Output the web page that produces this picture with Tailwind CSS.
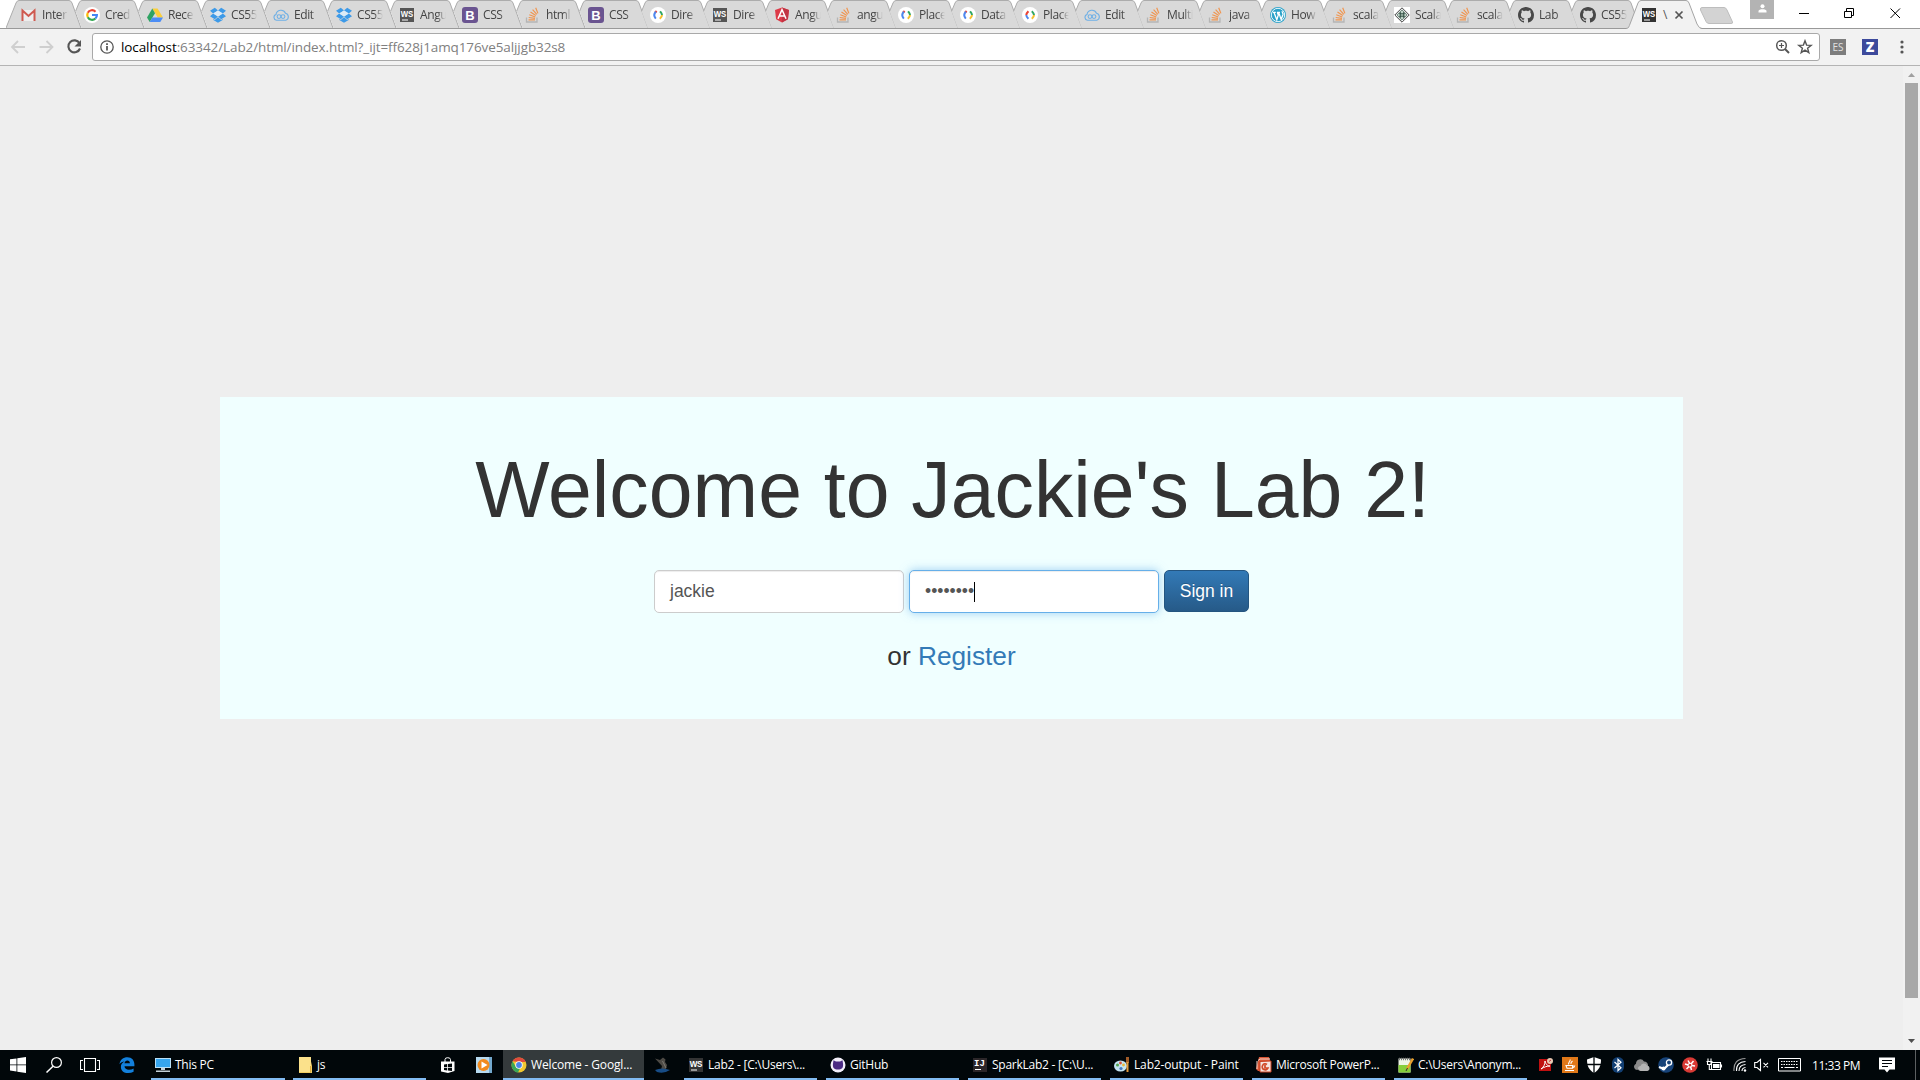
<!DOCTYPE html>
<html lang="en">
<head>
<meta charset="utf-8">
<title>Welcome</title>
<script src="https://cdn.jsdelivr.net/npm/@tailwindcss/browser@4"></script>
</head>
<body class="flex h-[1080px] w-[1920px] flex-col overflow-hidden bg-[#eeeeee] font-['Open_Sans','Noto_Sans',sans-serif]">

<svg class="hidden">
  <symbol id="gmail" viewBox="0 0 16 16"><path d="M1 3h13v11H1z" fill="#eee"/><path d="M1.500 14V3.500l6 5.500 6-5.500V14" fill="none" stroke="#cf5a50" stroke-width="2"/></symbol>
  <symbol id="google" viewBox="0 0 16 16"><circle cx="8" cy="8" r="8" fill="#fff"/><g fill="none" stroke-width="2.200"><path d="M11.500 4.700A4.800 4.800 0 0 0 3.800 5.800" stroke="#ea4335"/><path d="M3.800 5.800a4.800 4.800 0 0 0 0 4.400" stroke="#fbbc05"/><path d="M3.800 10.200a4.800 4.800 0 0 0 7.600 1.300" stroke="#34a853"/><path d="M11.400 11.500A4.800 4.800 0 0 0 12.900 8H8" stroke="#4285f4"/></g></symbol>
  <symbol id="drive" viewBox="0 0 16 16"><path d="M5.400 1.500h5.200L16 10.500h-5.300z" fill="#fbcf3b"/><path d="M5.300 1.600 8 6.200 2.700 15 0 10.500z" fill="#2fa363"/><path d="M5.300 10.500H16L13.300 15H2.700z" fill="#4c8df5"/></symbol>
  <symbol id="dropbox" viewBox="0 0 16 16"><path d="M4.800.8 8 3.500 3.200 6.500 0 3.800zM11.200.8 16 3.800 12.800 6.500 8 3.500zM0 9.300 3.200 6.500 8 9.500 4.800 12.300zM12.800 6.500 16 9.300 11.200 12.300 8 9.500zM8 10.300l3.200 2.700 1.500-1v1L8 15.800 3.300 13v-1l1.500 1z" fill="#3d9ae8"/><path d="M8 3.500l4.800 3L8 9.500l-4.800-3z" fill="#dcebf7"/></symbol>
  <symbol id="cloud" viewBox="0 0 16 16"><g fill="none" stroke="#6fb0e6" stroke-width="1.100"><path d="M3.500 13.300a3 3 0 0 1-.5-5.800 5 5 0 0 1 9.500-1.300 3.700 3.700 0 0 1 .3 7.100z"/><circle cx="6" cy="9.600" r="1.900"/><circle cx="10" cy="9.600" r="1.900"/></g></symbol>
  <symbol id="ws" viewBox="0 0 16 16"><path d="M1 1h14v14H1z" fill="currentColor"/><text x="8" y="9.800" font-size="9.500" font-weight="bold" text-anchor="middle" textLength="12.500" lengthAdjust="spacingAndGlyphs" fill="#fff" font-family="Liberation Sans">WS</text><path d="M3 12.500h6v1H3z" fill="#fff"/></symbol>
  <symbol id="boot" viewBox="0 0 16 16"><rect width="16" height="16" rx="3" fill="#6a5490"/><text x="8" y="12.800" font-size="13" font-weight="bold" text-anchor="middle" fill="#fff" font-family="Liberation Sans">B</text></symbol>
  <symbol id="so" viewBox="0 0 16 16"><path d="M1.500 10.500v4.500h10.500v-4.500" fill="none" stroke="#b5b5b5" stroke-width="1.300"/><path d="M3.500 12.800h6.500M3.700 10.500l6.300.9M4.300 7.800l6 2.200M5.500 5l5.300 3.500M7.600 2.700l4.200 4.700M10.700.8l2.200 5.600" stroke="#f0954f" stroke-width="1.200"/></symbol>
  <symbol id="dev" viewBox="0 0 16 16"><circle cx="8" cy="8" r="8" fill="#fff"/><g fill="none" stroke-width="2"><path d="M6.600 4 5 5.700" stroke="#ea4335"/><path d="M5.800 4.700C3.600 7 3.600 9 5.800 11.600" stroke="#4c86ee"/><path d="M10 4.300C11 5.500 12 6.500 12 8" stroke="#30a663"/><path d="M12 8c0 1.500-1 2.500-2.200 3.800" stroke="#f5c02e"/></g></symbol>
  <symbol id="dev2" viewBox="0 0 16 16"><circle cx="8" cy="8" r="8" fill="#fff"/><g fill="none" stroke-width="2"><path d="M6.400 4.200C5 5.600 4.300 6.700 4.300 8" stroke="#ea4335"/><path d="M4.300 8c0 1.300.7 2.400 2.100 3.800" stroke="#4c86ee"/><path d="M9.800 4.200C11 5.500 12 6.500 12 8" stroke="#30a663"/><path d="M12 8c0 1.500-1 2.500-2.200 3.800" stroke="#f5c02e"/></g></symbol>
  <symbol id="ng" viewBox="0 0 16 16"><path d="M8 .5 15 3l-1.100 9.300L8 15.500l-5.900-3.200L1 3z" fill="#dd3a48"/><path d="M8 .5 15 3l-1.100 9.300L8 15.500z" fill="#c23443"/><path d="M4 11.700 8 2.700l4 9M5.800 9h4.400" fill="none" stroke="#fff" stroke-width="1.500"/></symbol>
  <symbol id="wp" viewBox="0 0 16 16"><circle cx="8" cy="8" r="8" fill="#2ba2c9"/><circle cx="8" cy="8" r="6.700" fill="none" stroke="#fff" stroke-width=".9"/><path d="M2.800 5.300h3M3.900 5.300l2.900 7.500L8.300 8 7.300 5.300M7 5.300h3M8.600 5.300l2.600 7.200 1.800-5c.3-1-.9-2-.9-3.200" fill="none" stroke="#fff" stroke-width="1.300"/></symbol>
  <symbol id="dia" viewBox="0 0 16 16"><path d="M0 0h16v16H0z" fill="#fff"/><path d="M8 .8 15.200 8 8 15.200.8 8z" fill="none" stroke="#444"/><path d="M8 2.800 13.200 8 8 13.200 2.800 8z" fill="#bfd3c8" stroke="#345045" stroke-width=".7"/><path d="M5 6.500h6M5 8h6M5 9.500h6M6.500 5v6M9.500 5v6" stroke="#2c4a3e" stroke-width=".7"/></symbol>
  <symbol id="gh" viewBox="0 0 16 16"><path fill="#484848" d="M8 0C3.580 0 0 3.580 0 8c0 3.540 2.290 6.530 5.470 7.590.4.070.55-.17.55-.38 0-.19-.01-.82-.01-1.490-2.010.37-2.530-.49-2.690-.94-.09-.23-.48-.94-.82-1.130-.28-.15-.68-.52-.01-.53.63-.01 1.080.58 1.230.82.720 1.210 1.870.87 2.330.66.070-.52.280-.87.510-1.070-1.780-.2-3.640-.89-3.640-3.950 0-.87.310-1.590.82-2.150-.08-.2-.36-1.020.08-2.120 0 0 .67-.21 2.200.82.640-.18 1.320-.27 2-.27s1.360.09 2 .27c1.530-1.040 2.200-.82 2.200-.82.440 1.100.16 1.920.08 2.120.51.560.82 1.270.82 2.150 0 3.070-1.870 3.750-3.650 3.950.29.250.54.730.54 1.480 0 1.070-.01 1.930-.01 2.200 0 .21.150.46.550.38A8.010 8.010 0 0 0 16 8c0-4.420-3.580-8-8-8z"/></symbol>
</svg>

<!-- Tab strip -->
<header class="relative flex h-[29px] shrink-0 border-b border-[#999999] bg-white pl-[6px]">
  <div id="tabs" class="flex"></div>
  <div class="relative flex h-[29px] w-[78px] items-center pl-[14px]">
    <svg class="absolute top-0 left-[-1px] h-[29px] w-[78px]" viewBox="0 0 78 29"><path d="M0 28.500C3 28.500 3 26 4 24L12 3Q13 .5 15 .5H60Q62 .5 63 3L71 24Q73 28.500 75 28.500V29H0z" fill="#f2f2f2"/><path d="M0 28.500C3 28.500 3 26 4 24L12 3Q13 .5 15 .5H60Q62 .5 63 3L71 24Q73 28.500 76 28.500" fill="none" stroke="#a5a5a5"/></svg>
    <svg class="relative size-4 text-[#333333]"><use href="#ws"/></svg>
    <span class="relative ml-[6px] w-[8px] text-[12px] text-[#555555]">\</span>
    <svg class="relative ml-[3px] size-[10px]" viewBox="0 0 10 10"><path d="M1.500 1.500l7 7m0-7-7 7" stroke="#555" stroke-width="1.700"/></svg>
  </div>
  <svg class="mt-[6px] ml-[-6px] h-[19px] w-[36px]" viewBox="0 0 36 19"><path d="M3 1.500H25Q27 1.500 28 4L33.500 16Q34 17.500 32 17.500H10Q8 17.500 7 15.500L1.500 4Q1 1.500 3 1.500z" fill="#d3d3d3" stroke="#bdbdbd"/></svg>
  <div class="ml-auto flex">
    <div class="mr-[22px] flex h-[19px] w-[24px] justify-center bg-[#b3b3b3]"><svg class="mt-[4px] size-[9px]" viewBox="0 0 9 9"><circle cx="4.500" cy="2.200" r="2" fill="#fff"/><path d="M.5 8.500V7c0-2.200 8-2.200 8 0v1.500z" fill="#fff"/></svg></div>
    <svg class="mt-[3px] h-[20px] w-[124px]" viewBox="0 0 124 20"><g fill="none" stroke="#000"><path d="M3 10.500h10M48.500 8.500h7v6h-7zM50.500 8.500v-3h7v7h-2M94.500 5.500l9.500 9.500m0-9.500-9.500 9.500"/></g></svg>
  </div>
</header>

<!-- Toolbar -->
<div class="flex h-[37px] shrink-0 items-center border-b border-[#b4b4b4] bg-[#f2f2f2]">
  <svg class="ml-[10px] h-[18px] w-[74px]" viewBox="0 0 74 18"><g fill="none" stroke="#cfcfcf" stroke-width="1.800"><path d="M15 9H2m6-6L2 9l6 6M29.500 9h13m-6-6 6 6-6 6"/></g><path d="M69.500 5.200A6 6 0 1 0 70 10.500" fill="none" stroke="#555" stroke-width="2.100"/><path d="M71 2v6.500h-6.500z" fill="#555"/></svg>
  <div class="ml-[8px] flex h-[28px] w-[1728px] items-center rounded-[3px] border border-[#a9a9a9] bg-white pl-[7px]">
    <svg class="size-[14px]" viewBox="0 0 14 14"><circle cx="7" cy="7" r="6.200" fill="none" stroke="#555" stroke-width="1.300"/><path d="M7 6v4.500M7 3.300v1.600" stroke="#444" stroke-width="1.600"/></svg>
    <span class="ml-[7px] text-[13.500px] tracking-[-0.1px] whitespace-nowrap text-[#808080]"><span class="text-black">localhost</span>:63342/Lab2/html/index.html?_ijt=ff628j1amq176ve5aljjgb32s8</span>
    <svg class="mr-[6px] ml-auto h-[16px] w-[38px]" viewBox="0 0 38 16"><g fill="none" stroke="#555"><circle cx="6.500" cy="6.500" r="4.800" stroke-width="1.500"/><path d="M10 10l4 4" stroke-width="2"/><path d="M4 6.500h5M6.500 4v5" stroke-width="1.200"/><path d="M30 1.800l1.600 4.300 4.600.2-3.600 2.900 1.200 4.400L30 11.100l-3.800 2.500 1.200-4.400-3.600-2.900 4.600-.2z" stroke-width="1.400"/></g></svg>
  </div>
  <span class="ml-[10px] flex size-4 items-center justify-center bg-[#7d7d7d] text-[10px] text-[#e0e0e0]">ES</span>
  <span class="ml-[16px] flex size-4 items-center justify-center bg-[#3d4a9c] text-[14px] leading-none font-extrabold text-white">Z</span>
  <svg class="ml-[22px] h-[14px] w-[4px]" viewBox="0 0 4 14" fill="#555"><circle cx="2" cy="2" r="1.600"/><circle cx="2" cy="7" r="1.600"/><circle cx="2" cy="12" r="1.600"/></svg>
</div>

<!-- Page -->
<div class="flex h-[984px] shrink-0">
  <main class="flex flex-1 justify-center pt-[331px] font-['Liberation_Sans',sans-serif]">
    <section class="flex h-[322px] w-[1463px] flex-col items-center bg-[#f0ffff] text-[#333333]">
      <h1 class="mt-[50px] ml-[2px] text-[78.750px] leading-[87px] whitespace-nowrap">Welcome to Jackie's Lab 2!</h1>
      <form class="mt-[36px] flex gap-[5px] text-[17.500px] leading-[25px]">
        <div class="flex h-[43px] w-[250px] items-center rounded-[5px] border border-[#cccccc] bg-white pl-[15px] text-[#555555] shadow-[inset_0_1px_1px_rgba(0,0,0,0.075)]">jackie</div>
        <div class="flex h-[43px] w-[250px] items-center rounded-[5px] border border-[#66afe9] bg-white pl-[15px] text-[#555555] shadow-[inset_0_1px_1px_rgba(0,0,0,0.075),0_0_10px_rgba(102,175,233,0.6)]"><span>••••••••</span><span class="h-[20px] w-px bg-black"></span></div>
        <div class="flex h-[42px] w-[85px] items-center justify-center rounded-[5px] border border-[#245580] bg-linear-to-b from-[#337ab7] to-[#265a88] text-white [text-shadow:0_-1px_0_rgba(0,0,0,0.2)]">Sign in</div>
      </form>
      <p class="mt-[25px] text-[26.250px] leading-[37px]">or <a class="text-[#337ab7]">Register</a></p>
    </section>
  </main>
  <div class="flex w-[17px] flex-col items-center bg-[#f1f1f1]">
    <svg class="mt-[7px] h-[4px] w-[7px]" viewBox="0 0 7 4"><path d="M3.500 0 7 4H0z" fill="#a0a0a0"/></svg>
    <div class="mt-[6px] h-[915px] w-[13px] bg-[#a8a8a8]"></div>
    <svg class="mt-[41px] h-[4px] w-[7px]" viewBox="0 0 7 4"><path d="M3.500 4 7 0H0z" fill="#505050"/></svg>
  </div>
</div>

<!-- Taskbar -->
<footer class="flex h-[30px] shrink-0 bg-[#01070a] text-[12px] tracking-[-0.25px] text-white">
  <div class="flex w-[151px] items-center pl-[10px]">
    <svg class="size-4" viewBox="0 0 16 16" fill="#fff"><path d="M0 2.300 6.500 1.400v6.100H0zM7.300 1.300 16 0v7.500H7.300zM0 8.300h6.500v6.200L0 13.600zM7.300 8.300H16V16l-8.700-1.300z"/></svg>
    <svg class="ml-[20px] size-4" viewBox="0 0 16 16"><circle cx="10.500" cy="5.500" r="4.900" fill="none" stroke="#fff" stroke-width="1.200"/><path d="M7 9.200.5 15.500" stroke="#fff" stroke-width="1.500"/></svg>
    <svg class="ml-[18px] h-[14px] w-[20px]" viewBox="0 0 20 14"><path d="M4.500.5h11v13h-11zM3 2.500H.5v9H3M17 2.500h2.500v9H17" fill="none" stroke="#fff" stroke-width="1.100"/></svg>
    <svg class="ml-[19px] size-4" viewBox="0 0 16 16"><path d="M.5 7.300C1 2.800 4.300.2 8.400.2c4.500 0 7 3.200 7 7.200v1.800H5.500c.1 2.300 2 3.500 4.400 3.500 1.800 0 3.300-.4 4.700-1.200v3.300c-1.600.8-3.400 1.200-5.400 1.200-4.500 0-7.300-2.400-7.300-6.100C1.900 7.300 3.200 5.600 5.500 4.500 3.500 4.600 1.800 5.500.5 7.300zm5-1h5.400C10.800 4.600 9.900 3.600 8.400 3.600S5.900 4.600 5.500 6.300z" fill="#1380dc"/></svg>
  </div>
  <div class="flex w-[134px] items-center border-b-2 border-[#82bbf2] pt-px pl-[4px]">
    <svg class="size-4" viewBox="0 0 16 16"><path d="M0 1h16v10H0z" fill="#b9e0f7"/><path d="M1 2h14v8H1z" fill="#36a5ee"/><path d="M6 11h4v2H6zM1 13.500h14V15H1z" fill="#c4d0d8"/></svg>
    <span class="ml-[4px] whitespace-nowrap">This PC</span>
  </div>
  <div class="ml-[8px] flex w-[133px] items-center border-b-2 border-[#82bbf2] pt-px pl-[6px]">
    <svg class="h-4 w-[13px]" viewBox="0 0 13 16"><path d="M0 0h11l2 9v7H0z" fill="#f3ce62"/><path d="M0 0h12v15H0z" fill="#fbe18b"/><path d="M11.500 9v6.500" stroke="#dba93c"/></svg>
    <span class="ml-[5px]">js</span>
  </div>
  <div class="flex w-[77px] items-center pl-[14px]">
    <svg class="size-4" viewBox="0 0 16 16"><path d="M1 4.500h13.500V14L8 16l-7-1.500z" fill="#fff"/><path d="M5 5V2.500Q5 .7 7.700.7t2.800 1.800V5" fill="none" stroke="#fff"/><path d="M4 7.500 7.200 7v3H4zM8 7l4-.4V10H8zM4 10.700h3.200v2.700L4 13zM8 10.700h4v3.200l-4-.4z" fill="#01070a"/></svg>
    <svg class="ml-[20px] size-4" viewBox="0 0 16 16"><path d="M0 0h16v16H0z" fill="#b7daf0"/><path d="M13 0h3v16h-3z" fill="#73a9ce"/><circle cx="7.500" cy="8" r="6" fill="#f28a1c"/><path d="M5.500 4.500 11.500 8l-6 3.500z" fill="#fff"/></svg>
  </div>
  <div class="flex w-[141px] items-center border-b-2 border-[#82bbf2] bg-[#343a3c] pt-px pl-[8px]">
    <svg class="size-4" viewBox="0 0 16 16"><circle cx="8" cy="8" r="7.500" fill="#f1c62f"/><path d="M1.500 4.200A7.500 7.500 0 0 1 14.800 5H8z" fill="#df4a3d"/><path d="M1.500 4.200 5 10l4 1.500-2 4A7.500 7.500 0 0 1 1.500 4.200z" fill="#3aa757"/><circle cx="8" cy="8" r="3.700" fill="#fff"/><circle cx="8" cy="8" r="2.900" fill="#4a86e8"/></svg>
    <span class="ml-[4px] tracking-[-0.15px] whitespace-nowrap">Welcome - Googl...</span>
  </div>
  <div class="flex w-[40px] items-center pl-[10px]">
    <svg class="size-4" viewBox="0 0 16 16"><path d="M1 1.500 6 3l3-2.500 2.500 2L11 5l2 3-1 4-5 1 1-4z" fill="#4d4a45"/><path d="M1 13q7-3 15 0-6 4-13 2z" fill="#174c86"/><path d="M8.500 4 12 11" stroke="#7f7c76"/></svg>
  </div>
  <div class="flex w-[133px] items-center border-b-2 border-[#82bbf2] pt-px pl-[4px]">
    <svg class="size-4 text-[#343434]"><use href="#ws"/></svg>
    <span class="ml-[4px] whitespace-nowrap">Lab2 - [C:\Users\...</span>
  </div>
  <div class="ml-[9px] flex w-[133px] items-center border-b-2 border-[#82bbf2] pt-px pl-[4px]">
    <svg class="size-4" viewBox="0 0 16 16"><circle cx="8" cy="8" r="7.500" fill="#f3effa"/><path d="M3.500 3.200 6 4.500h4l2.500-1.300.5 3.300c.6 4.500-1.300 6-5 6s-5.600-1.500-5-6z" fill="#4b2a83"/></svg>
    <span class="ml-[4px]">GitHub</span>
  </div>
  <div class="ml-[9px] flex w-[133px] items-center border-b-2 border-[#82bbf2] pt-px pl-[4px]">
    <svg class="size-4" viewBox="0 0 16 16"><path d="M1 1h14v14H1z" fill="#2b2629"/><text x="7.500" y="9" font-size="9" font-weight="bold" text-anchor="middle" letter-spacing="0" fill="#fff" font-family="Liberation Mono">IJ</text><path d="M3 12h6v1H3z" fill="#fff"/></svg>
    <span class="ml-[4px] whitespace-nowrap">SparkLab2 - [C:\U...</span>
  </div>
  <div class="ml-[9px] flex w-[133px] items-center border-b-2 border-[#82bbf2] pt-px pl-[4px]">
    <svg class="size-4" viewBox="0 0 16 16"><ellipse cx="6.500" cy="9" rx="6.500" ry="5.500" fill="#c3e3f2"/><circle cx="3.500" cy="8" r="1.500" fill="#54a54b"/><circle cx="6.500" cy="6" r="1.400" fill="#d85035"/><circle cx="9.500" cy="8" r="1.400" fill="#eab637"/><circle cx="7" cy="11.500" r="1.600" fill="#4275bd"/><path d="M12 0h3v6h-3z" fill="#a05b28"/><path d="M12.500 5h2v10h-2z" fill="#e39b3c"/></svg>
    <span class="ml-[4px] tracking-[-0.15px] whitespace-nowrap">Lab2-output - Paint</span>
  </div>
  <div class="ml-[9px] flex w-[133px] items-center border-b-2 border-[#82bbf2] pt-px pl-[4px]">
    <svg class="size-4" viewBox="0 0 16 16"><path d="M3 0h10l1 4v10H2L0 12z" fill="#d85635"/><path d="M2 3.500 4 2h10M1 12V4" fill="none" stroke="#f7d9cf"/><path d="M4 4.500 15 4v11H4z" fill="#f5e4de" stroke="#c94222"/><path d="M11 7.500A3 3 0 1 0 12 11H9V8" fill="none" stroke="#d14a28" stroke-width="1.700"/></svg>
    <span class="ml-[4px] whitespace-nowrap">Microsoft PowerP...</span>
  </div>
  <div class="ml-[9px] flex w-[133px] items-center border-b-2 border-[#82bbf2] pt-px pl-[4px]">
    <svg class="size-4" viewBox="0 0 16 16"><path d="M.5 1.500h12v14H.5z" fill="#eef5e6"/><path d="M.5 8h12v7.500H.5z" fill="#86cf3a"/><path d="M1 2h11" stroke="#777" stroke-width="2.500" stroke-dasharray="1 1"/><path d="M15 1.500 9 12" stroke="#e8a02e" stroke-width="2.500"/><path d="M9.500 11 8 14" stroke="#333"/></svg>
    <span class="ml-[4px] whitespace-nowrap">C:\Users\Anonym...</span>
  </div>
  <div class="ml-[11px] flex items-center gap-[8px]">
    <svg class="size-4" viewBox="0 0 16 16"><path d="M1 2h12v12H1z" fill="#c01010"/><path d="M3 12c3-2 4-5 4-8 1 4 3 5 5 5-3 0-6 1-9 3z" fill="none" stroke="#fff"/><circle cx="12" cy="4" r="3" fill="#e9c9b2"/><path d="M11 4.500 13 3" stroke="#b34"/></svg>
    <svg class="size-4" viewBox="0 0 16 16"><path d="M0 0h16v16H0z" fill="#e07818"/><path d="M4 8.500h6.500v2.800H5zM3 13.500h9M10.500 9h2l-1 2M7 7.500C5 5.500 9 5 8 2.500M9 7q-.5-1.500 1.500-3" fill="none" stroke="#fff" stroke-width="1.100"/></svg>
    <svg class="size-4" viewBox="0 0 16 16"><path d="M8 0 15 2.500c0 6-1.500 10-7 13.500C2.500 12.500 1 8.500 1 2.500z" fill="#fff"/><path d="M8 0v16M1 7.500h14" stroke="#01070a" stroke-width="1.300"/></svg>
    <svg class="size-4" viewBox="0 0 16 16"><rect x="2" width="12" height="16" rx="6" fill="#123f73"/><path d="M4.500 5 11 10.700 8 13.500v-11L11 5.300 4.500 11" fill="none" stroke="#fff" stroke-width="1.200"/></svg>
    <svg class="size-4" viewBox="0 0 16 16"><path d="M3 13A3.300 3.300 0 0 1 2 6.700a4.300 4.300 0 0 1 8-2.200A4 4 0 0 1 14 9z" fill="#8b8b8b"/><path d="M6.500 14a2.500 2.500 0 0 1 0-5 3.500 3.500 0 0 1 6.500-.5A2.800 2.800 0 0 1 13.500 14z" fill="#b3b3b3"/></svg>
    <svg class="size-4" viewBox="0 0 16 16"><circle cx="8" cy="8" r="7.800" fill="#174379"/><path d="M1 10 6 12l5-5" fill="none" stroke="#fff" stroke-width="2.200"/><circle cx="11" cy="5.500" r="2.600" fill="#174379" stroke="#fff" stroke-width="1.300"/><circle cx="5.500" cy="11.500" r="2" fill="#fff"/></svg>
    <svg class="size-4" viewBox="0 0 16 16"><circle cx="8" cy="8" r="7.800" fill="#d93a35"/><path d="M8 7 6 3.500M9 7l2.500-3M9.500 8.500l3.500.5M8.500 9.500l1 3.500M7 9.500 4.500 12M6.500 8 3 7" stroke="#fff" stroke-width="1.500"/><circle cx="8" cy="8.200" r="2" fill="none" stroke="#fff"/></svg>
    <svg class="h-4 w-[17px]" viewBox="0 0 17 16"><path d="M5.500 5.500h9v7h-9zM15.500 7.500v3M2 1.500v3M5 1.500v3M.5 4.500h6M1.500 5v2.500H5V5M3.300 8v4.500h2" fill="none" stroke="#fff" stroke-width="1.100"/><path d="M7 7h6.500v4H7z" fill="#fff"/></svg>
    <svg class="ml-[2px] size-4" viewBox="0 0 16 16"><g fill="none" stroke="#fff" stroke-width="1.100"><path d="M9 14q0-3 3.500-3.500M6 14q0-6 6.500-6.500M3.500 14Q3 5 12.500 4.500" /><path d="M1 14Q0 2 12.500 1.500" stroke="#999"/></g><circle cx="12" cy="13.500" r="1.200" fill="#fff"/></svg>
    <svg class="ml-[-3px] size-4" viewBox="0 0 16 16"><path d="M.7 5.500H3L6.500 2.500v11L3 10.500H.7zM9.500 5.800 14 10.300m0-4.500-4.500 4.500" fill="none" stroke="#fff" stroke-width="1.100"/></svg>
    <svg class="h-[14px] w-[23px]" viewBox="0 0 23 14"><path d="M.5.5h22v12.500H.5z" fill="none" stroke="#fff"/><path d="M3 3.500h17M3 6.500h17" stroke="#fff" stroke-dasharray="1.500 1"/><path d="M3 9.500h2M6.500 9.500h10M18 9.500h2" stroke="#fff"/></svg>
  </div>
  <span class="ml-[11px] self-center pt-px tracking-[-0.45px] whitespace-nowrap">11:33 PM</span>
  <div class="ml-auto flex items-center">
    <svg class="mr-[20px] size-4" viewBox="0 0 16 16"><path d="M0 .5h16v12h-5.500L8 15.500l-2.500-3H0z" fill="#fff"/><path d="M3 3.500h10M3 6.500h10M3 9.500h6" stroke="#01070a"/></svg>
    <div class="mr-[4px] h-full w-px bg-[#5c6062]"></div>
  </div>
</footer>

<script>
const tabs = [["gmail","Inter"],["google","Cred"],["drive","Rece"],["dropbox","CS55"],["cloud","Edit"],["dropbox","CS55"],["ws","Angu"],["boot","CSS"],["so","html"],["boot","CSS"],["dev","Dire"],["ws","Dire"],["ng","Angu"],["so","angu"],["dev","Place"],["dev","Data"],["dev2","Place"],["cloud","Edit"],["so","Multi"],["so","java"],["wp","How"],["so","scala"],["dia","Scala"],["so","scala"],["gh","Lab"],["gh","CS55"]];
document.getElementById("tabs").innerHTML = tabs.map(([icon, label], i) => {
  const left = i ? "M12.650 28L6.600 11.200L10 3Q11 .5 13 .5" : "M0 28L10 3Q11 .5 13 .5";
  // The spare pixels of the strip go to the first nine tabs
  return `<div class="relative flex h-[28px] ${i < 9 ? "w-[63px]" : "w-[62px]"} shrink-0 items-center pl-[15px]">
    <svg class="absolute top-0 left-0 h-[28px] w-[76px]" viewBox="0 0 76 28"><path d="${left}H63Q65 .5 66 3L75 28z" fill="#d9d9d9"/><path d="${i ? "M6.600 11.200L10 3Q11 .5 13 .5" : left}H63Q65 .5 66 3L75 28" fill="none" stroke="#acacac"/></svg>
    <svg class="relative mt-[2px] size-4 shrink-0 text-[#555555]"><use href="#${icon}"/></svg>
    <span class="relative mt-px ml-[5px] w-[26px] shrink-0 overflow-hidden text-[12px] tracking-[-0.4px] whitespace-nowrap text-[#444444] [mask-image:linear-gradient(to_right,#000_65%,transparent)]">${label}</span>
  </div>`;
}).join("");
</script>
</body>
</html>
